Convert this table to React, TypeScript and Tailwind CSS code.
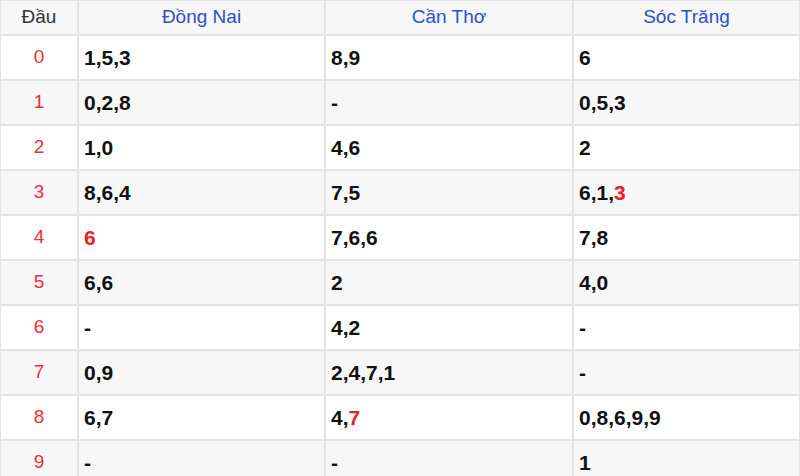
import React from 'react'

type Part = { t: string; red?: boolean }

// each cell is a list of pieces, red ones are the special numbers
const rows: Part[][][] = [
  [[{ t: '1,5,3' }], [{ t: '8,9' }], [{ t: '6' }]],
  [[{ t: '0,2,8' }], [{ t: '-' }], [{ t: '0,5,3' }]],
  [[{ t: '1,0' }], [{ t: '4,6' }], [{ t: '2' }]],
  [[{ t: '8,6,4' }], [{ t: '7,5' }], [{ t: '6,1,' }, { t: '3', red: true }]],
  [[{ t: '6', red: true }], [{ t: '7,6,6' }], [{ t: '7,8' }]],
  [[{ t: '6,6' }], [{ t: '2' }], [{ t: '4,0' }]],
  [[{ t: '-' }], [{ t: '4,2' }], [{ t: '-' }]],
  [[{ t: '0,9' }], [{ t: '2,4,7,1' }], [{ t: '-' }]],
  [[{ t: '6,7' }], [{ t: '4,' }, { t: '7', red: true }], [{ t: '0,8,6,9,9' }]],
  [[{ t: '-' }], [{ t: '-' }], [{ t: '1' }]],
]

const provinces = ['Đồng Nai', 'Cần Thơ', 'Sóc Trăng']

const App = () => {
  return (
    <div className="w-[800px] h-[476px] overflow-hidden bg-white font-['Liberation_Sans',Arial,sans-serif]">
      <table className="table-fixed border-collapse w-[802px] -mt-[1px] -ml-[1px]">
        <colgroup>
          <col className="w-[78px]" />
          <col className="w-[247px]" />
          <col className="w-[248px]" />
          <col />
        </colgroup>
        <thead>
          <tr className="bg-[#f7f7f7]">
            <th className="h-[35px] border-2 border-[#e3e3e3] text-[19px] font-normal text-[#333] text-center">
              Đầu
            </th>
            {provinces.map((p) => (
              <th
                key={p}
                className="h-[35px] border-2 border-[#e3e3e3] text-[19px] font-normal text-[#2b4fcb] text-center"
              >
                {p}
              </th>
            ))}
          </tr>
        </thead>
        <tbody>
          {rows.map((cells, i) => (
            <tr key={i} className={i % 2 === 1 ? 'bg-[#f7f7f7]' : 'bg-white'}>
              <td className="h-[45px] border-2 border-[#e3e3e3] text-center text-[19px] text-[#ee2d37]">{i}</td>
              {cells.map((parts, j) => (
                <td key={j} className="h-[45px] border-2 border-[#e3e3e3] pl-[5px] text-[21px] font-bold text-[#111]">
                  {parts.map((p, k) => (
                    <span key={k} className={p.red ? 'text-[#ee1c25]' : ''}>
                      {p.t}
                    </span>
                  ))}
                </td>
              ))}
            </tr>
          ))}
        </tbody>
      </table>
    </div>
  )
}

export default App
